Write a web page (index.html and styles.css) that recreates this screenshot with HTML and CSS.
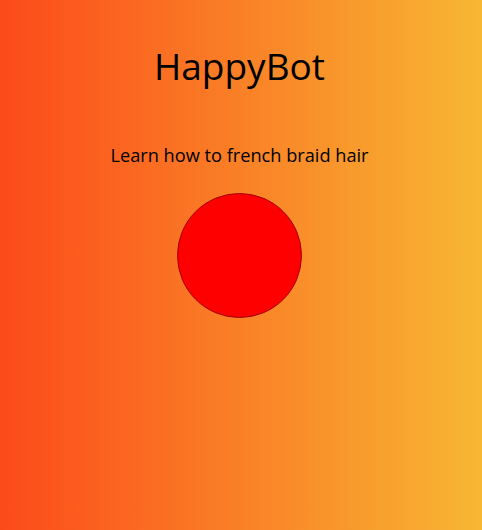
FILE: index.html
```html
<!DOCTYPE html>
<html>
<head>
<meta charset="utf-8">
<link rel="stylesheet" href="styles.css">
</head>
<body>
<main class="app">
  <h1 class="title">HappyBot</h1>
  <p class="prompt">Learn how to french braid hair</p>
  <div class="orb"></div>
</main>
</body>
</html>
```
FILE: styles.css
```css
html, body {
  margin: 0;
  height: 100%;
}
body {
  background: linear-gradient(to right, #fc4a1a, #f7b733);
  font-family: "Open Sans", "Noto Sans", sans-serif;
  color: #000;
}
.app {
  display: flex;
  flex-direction: column;
  align-items: center;
  padding: 41px 3px 0 0;
}
.title {
  margin: 0;
  font-size: 37px;
  font-weight: 400;
  line-height: 50px;
}
.prompt {
  margin: 51px 0 0;
  font-size: 18.2px;
  line-height: 26px;
}
.orb {
  margin-top: 25px;
  width: 123px;
  height: 123px;
  border-radius: 50%;
  background: #ff0000;
  border: 1px solid #a00000;
}
```
